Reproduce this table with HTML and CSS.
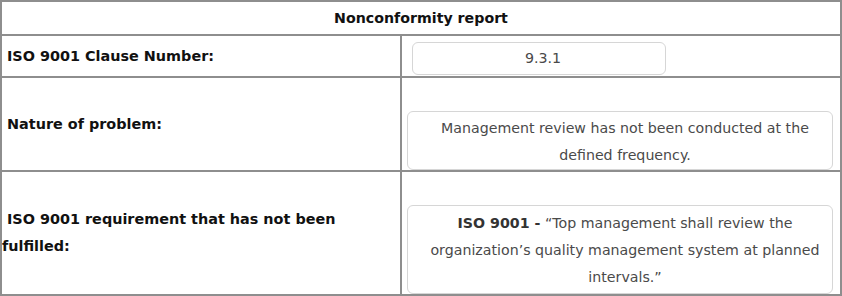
FILE: index.html
```html
<!DOCTYPE html>
<html>
<head>
<meta charset="utf-8">
<link rel="stylesheet" href="styles.css">
</head>
<body>
<div class="report">
  <div class="title">Nonconformity report</div>
  <div class="label label-1">ISO 9001 Clause Number:</div>
  <div class="value value-1"><div class="box box-small">9.3.1</div></div>
  <div class="label label-2">Nature of problem:</div>
  <div class="value value-2"><div class="box box-wide box-2">Management review has not been conducted at the<br>defined frequency.</div></div>
  <div class="label label-3"><div><span class="indent">ISO 9001 requirement that has not been</span><br>fulfilled:</div></div>
  <div class="value value-3"><div class="box box-wide box-3"><b class="std">ISO 9001 -</b> “Top management shall review the<br>organization’s quality management system at planned<br>intervals.”</div></div>
</div>
</body>
</html>
```

FILE: styles.css
```css
html, body {
  margin: 0;
  padding: 0;
  background: #ffffff;
}

.report {
  width: 842px;
  height: 296px;
  box-sizing: border-box;
  border: 2px solid #8e8e8e;
  display: grid;
  grid-template-columns: 400px 1fr;
  grid-template-rows: 34px 42px 94px 1fr;
  font-family: "DejaVu Sans", sans-serif;
  background: #fff;
}

.title {
  grid-column: 1 / 3;
  border-bottom: 2px solid #8e8e8e;
  display: flex;
  align-items: center;
  justify-content: center;
  font-weight: bold;
  font-size: 14.2px;
  color: #111;
}

.label {
  border-right: 2px solid #8e8e8e;
  border-bottom: 2px solid #8e8e8e;
  display: flex;
  align-items: center;
  font-weight: bold;
  font-size: 14.4px;
  line-height: 27px;
  color: #111;
  padding-left: 5px;
}

.label-3 {
  padding-left: 0;
  border-bottom: none;
}

.indent {
  padding-left: 5px;
}

.value {
  border-bottom: 2px solid #8e8e8e;
  display: flex;
  color: #4a4a4a;
  font-size: 14.2px;
}

.value-1 {
  align-items: flex-end;
  padding: 0 0 1px 10px;
}

.value-2 {
  align-items: flex-end;
  padding: 0 7px 0 5px;
}

.value-3 {
  align-items: flex-end;
  padding: 0 7px 0 5px;
  border-bottom: none;
}

.box {
  box-sizing: border-box;
  border: 1px solid #d6d6d6;
  border-radius: 6px;
  text-align: center;
  background: #fff;
}

.box-small {
  width: 254px;
  height: 33px;
  line-height: 31px;
  padding-left: 8px;
}

.box-wide {
  width: 100%;
  line-height: 27px;
  white-space: nowrap;
  padding-left: 10px;
}

.box-2 {
  height: 59px;
  padding-top: 3px;
}

.box-3 {
  height: 89px;
  padding-top: 4px;
}

.std {
  color: #333;
}
```
